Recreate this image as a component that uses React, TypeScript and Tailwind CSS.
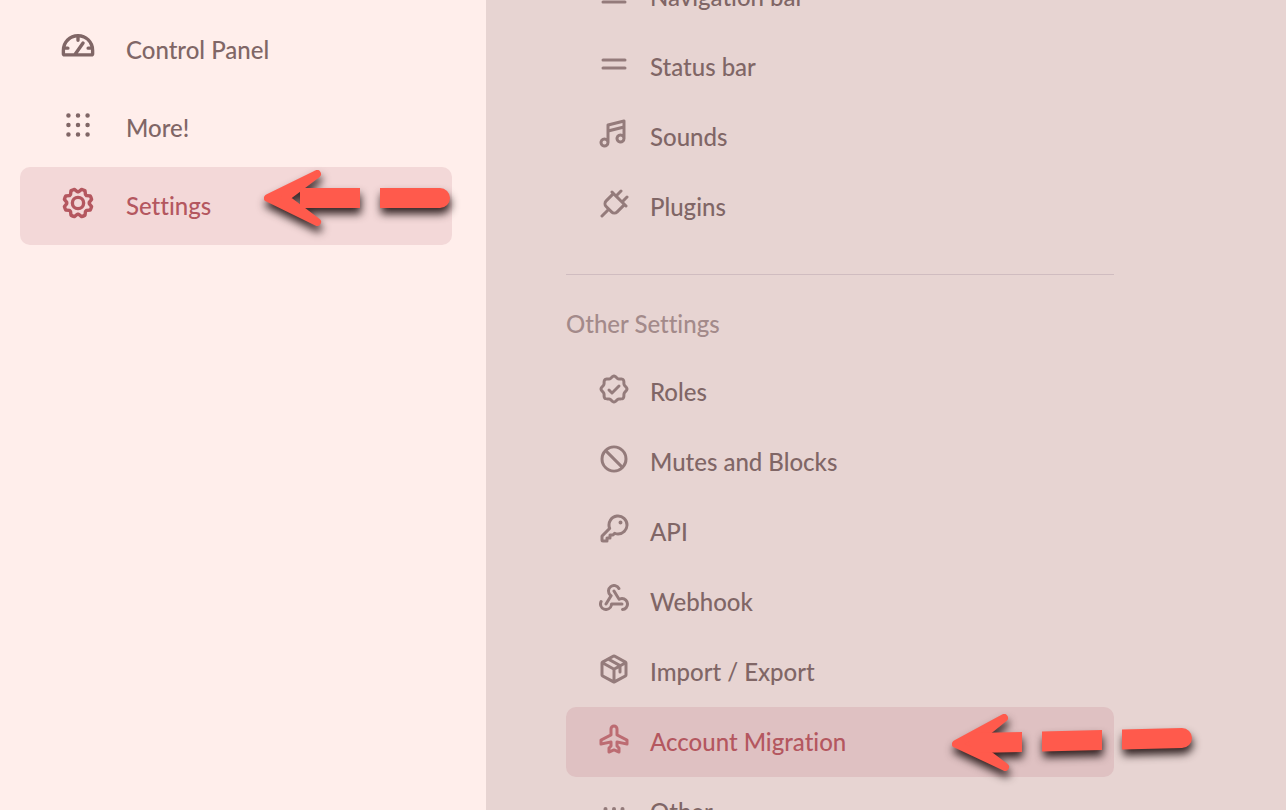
import type {IconType} from "react-icons";
import {
  PiAirplaneBold,
  PiDotsNineBold,
  PiDotsThreeBold,
  PiEqualsBold,
  PiGaugeBold,
  PiGearBold,
  PiKeyBold,
  PiListBold,
  PiMusicNotesBold,
  PiPackageBold,
  PiPlugBold,
  PiProhibitBold,
  PiSealCheckBold,
  PiWebhooksLogoBold,
} from "react-icons/pi";
import clsx from "clsx";

type MenuItem = {
  label: string;
  icon: IconType;
  active?: boolean;
};

const sidebarItems: MenuItem[] = [
  {label: "Control Panel", icon: PiGaugeBold},
  {label: "More!", icon: PiDotsNineBold},
  {label: "Settings", icon: PiGearBold, active: true},
];

const clientItems: MenuItem[] = [
  {label: "Navigation bar", icon: PiListBold},
  {label: "Status bar", icon: PiEqualsBold},
  {label: "Sounds", icon: PiMusicNotesBold},
  {label: "Plugins", icon: PiPlugBold},
];

const otherItems: MenuItem[] = [
  {label: "Roles", icon: PiSealCheckBold},
  {label: "Mutes and Blocks", icon: PiProhibitBold},
  {label: "API", icon: PiKeyBold},
  {label: "Webhook", icon: PiWebhooksLogoBold},
  {label: "Import / Export", icon: PiPackageBold},
  {label: "Account Migration", icon: PiAirplaneBold, active: true},
  {label: "Other", icon: PiDotsThreeBold},
];

function SidebarLink({label, icon: Icon, active}: MenuItem) {
  return (
    <a
      href="#"
      aria-current={active ? "page" : undefined}
      className={clsx(
        "relative flex h-[78px] items-center gap-[30px] rounded-[10px] pl-10",
        active ? "bg-[#f3d8d8] text-[#b4575f]" : "text-[#806666]",
      )}
    >
      <Icon className="mb-1.5 size-9 shrink-0" />
      <span>{label}</span>
      {active && <SettingsArrow />}
    </a>
  );
}

function SettingsLink({label, icon: Icon, active}: MenuItem) {
  return (
    <a
      href="#"
      aria-current={active ? "page" : undefined}
      className={clsx(
        "relative flex h-[70px] items-center gap-5 rounded-[10px] pl-8",
        active ? "bg-[#dfc1c2] text-[#b4575f]" : "text-[#806666]",
      )}
    >
      <Icon className="mb-1.5 size-8 shrink-0 opacity-80" />
      <span>{label}</span>
      {active && <MigrationArrow />}
    </a>
  );
}

const arrowClass =
  "pointer-events-none absolute overflow-visible fill-[#ff5a4c] stroke-[#ff5a4c] drop-shadow-[1px_6px_4px_rgba(30,15,15,0.9)]";

function SettingsArrow() {
  return (
    <svg className={clsx(arrowClass, "top-0 left-[240px] h-16 w-48")} viewBox="0 0 192 64" aria-hidden="true">
      <path d="M8 31 57 7 25 31 57 55Z" strokeWidth="8" strokeLinejoin="round" />
      <path d="M40 21h60v20H40zM120 21h60a10 10 0 0 1 0 20h-60z" stroke="none" />
    </svg>
  );
}

function MigrationArrow() {
  return (
    <svg className={clsx(arrowClass, "top-0 left-[382px] h-16 w-[248px]")} viewBox="0 0 248 64" aria-hidden="true">
      <path d="M8 37 56 11 25 36 57 60Z" strokeWidth="8" strokeLinejoin="round" />
      <path
        d="M25 26 74 25v20l-49 1zM94 24.500l60-1.500v20l-60 1.500zM174 22.500l60-1.500a10 10 0 0 1 0 20l-60 1.500z"
        stroke="none"
      />
    </svg>
  );
}

function App() {
  return (
    <div className="flex h-screen overflow-hidden bg-[#e7d4d2] font-['Lato','Noto_Sans',sans-serif] text-2xl leading-[34px] font-medium [font-variant-ligatures:none]">
      <nav className="w-[486px] shrink-0 bg-[#ffeeeb] pt-[11px] pr-[34px] pl-5">
        {sidebarItems.map((item) => (
          <SidebarLink key={item.label} {...item} />
        ))}
      </nav>

      <main className="min-w-0 flex-1 overflow-hidden pr-[172px] pl-20">
        {/* the list is scrolled, its first row is cut by the top edge */}
        <section className="-mt-[38px] border-b border-[#d0bcc0] pb-8">
          {clientItems.map((item) => (
            <SettingsLink key={item.label} {...item} />
          ))}
        </section>
        <section className="pt-8">
          <h2 className="pb-4 text-[#a38a8a]">Other Settings</h2>
          {otherItems.map((item) => (
            <SettingsLink key={item.label} {...item} />
          ))}
        </section>
      </main>
    </div>
  );
}

export default App;
